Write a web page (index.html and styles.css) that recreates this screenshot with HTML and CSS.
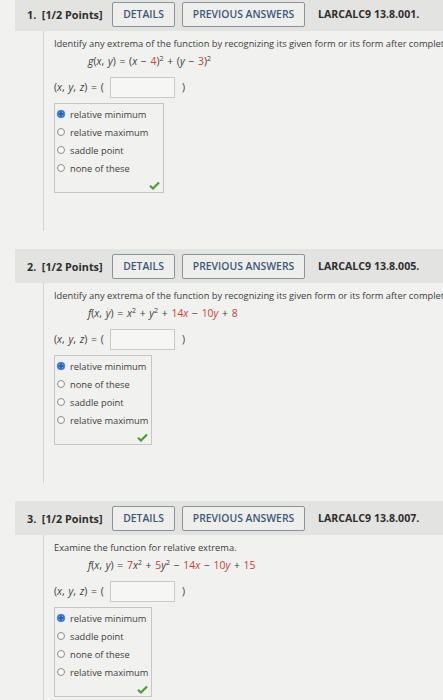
FILE: index.html
```html
<!DOCTYPE html>
<html>
<head>
<meta charset="utf-8">
<link rel="stylesheet" href="styles.css">
</head>
<body>
<div class="page">

  <section class="question q1">
    <div class="qhead">
      <span class="qnum">1.&nbsp; [1/2 Points]</span>
      <span class="btn btn-details">DETAILS</span>
      <span class="btn btn-prev">PREVIOUS ANSWERS</span>
      <span class="qref">LARCALC9 13.8.001.</span>
    </div>
    <div class="qbody">
      <div class="prompt">Identify any extrema of the function by recognizing its given form or its form after completing the square. Verify your results.</div>
      <div class="formula"><i>g</i>(<i>x</i>, <i>y</i>) = (<i>x</i> &minus; <span class="red">4</span>)<sup>2</sup> + (<i>y</i> &minus; <span class="red">3</span>)<sup>2</sup></div>
      <div class="answer"><span class="xyz">(<i>x</i>, <i>y</i>, <i>z</i>) = (</span><span class="inbox"></span><span class="close">)</span></div>
      <div class="choices wide">
        <div class="opt"><span class="radio on"></span>relative minimum</div>
        <div class="opt"><span class="radio"></span>relative maximum</div>
        <div class="opt"><span class="radio"></span>saddle point</div>
        <div class="opt"><span class="radio"></span>none of these</div>
        <div class="checkrow"><svg class="check" viewBox="0 0 12 10" width="11" height="9"><path d="M1 5.2 L4.3 8.4 L11 1.6" fill="none" stroke="#4f9a3a" stroke-width="2.4"/></svg></div>
      </div>
    </div>
  </section>

  <section class="question q2">
    <div class="qhead">
      <span class="qnum">2.&nbsp; [1/2 Points]</span>
      <span class="btn btn-details">DETAILS</span>
      <span class="btn btn-prev">PREVIOUS ANSWERS</span>
      <span class="qref">LARCALC9 13.8.005.</span>
    </div>
    <div class="qbody">
      <div class="prompt">Identify any extrema of the function by recognizing its given form or its form after completing the square. Verify your results.</div>
      <div class="formula"><i>f</i>(<i>x</i>, <i>y</i>) = <i>x</i><sup>2</sup> + <i>y</i><sup>2</sup> + <span class="red">14<i>x</i></span> &minus; <span class="red">10<i>y</i></span> + <span class="red">8</span></div>
      <div class="answer"><span class="xyz">(<i>x</i>, <i>y</i>, <i>z</i>) = (</span><span class="inbox"></span><span class="close">)</span></div>
      <div class="choices">
        <div class="opt"><span class="radio on"></span>relative minimum</div>
        <div class="opt"><span class="radio"></span>none of these</div>
        <div class="opt"><span class="radio"></span>saddle point</div>
        <div class="opt"><span class="radio"></span>relative maximum</div>
        <div class="checkrow"><svg class="check" viewBox="0 0 12 10" width="11" height="9"><path d="M1 5.2 L4.3 8.4 L11 1.6" fill="none" stroke="#4f9a3a" stroke-width="2.4"/></svg></div>
      </div>
    </div>
  </section>

  <section class="question q3">
    <div class="qhead">
      <span class="qnum">3.&nbsp; [1/2 Points]</span>
      <span class="btn btn-details">DETAILS</span>
      <span class="btn btn-prev">PREVIOUS ANSWERS</span>
      <span class="qref">LARCALC9 13.8.007.</span>
    </div>
    <div class="qbody last">
      <div class="prompt">Examine the function for relative extrema.</div>
      <div class="formula"><i>f</i>(<i>x</i>, <i>y</i>) = <span class="red">7</span><i>x</i><sup>2</sup> + <span class="red">5</span><i>y</i><sup>2</sup> &minus; <span class="red">14<i>x</i></span> &minus; <span class="red">10<i>y</i></span> + <span class="red">15</span></div>
      <div class="answer"><span class="xyz">(<i>x</i>, <i>y</i>, <i>z</i>) = (</span><span class="inbox"></span><span class="close">)</span></div>
      <div class="choices">
        <div class="opt"><span class="radio on"></span>relative minimum</div>
        <div class="opt"><span class="radio"></span>saddle point</div>
        <div class="opt"><span class="radio"></span>none of these</div>
        <div class="opt"><span class="radio"></span>relative maximum</div>
        <div class="checkrow"><svg class="check" viewBox="0 0 12 10" width="11" height="9"><path d="M1 5.2 L4.3 8.4 L11 1.6" fill="none" stroke="#4f9a3a" stroke-width="2.4"/></svg></div>
      </div>
    </div>
  </section>

</div>
</body>
</html>
```

FILE: styles.css
```css
html, body {
  margin: 0;
  padding: 0;
}
body {
  background: #f1f1ef;
  width: 443px;
  height: 700px;
  overflow: hidden;
  font-family: "Open Sans", "DejaVu Sans", sans-serif;
  color: #3c3c3c;
}
.page {
  display: flex;
  flex-direction: column;
  gap: 18px;
  padding-left: 15px;
  margin-top: -3px;
}
.question {
  display: flex;
  flex-direction: column;
}
.qhead {
  display: flex;
  align-items: center;
  height: 34px;
  background: #e3e3e1;
  padding-left: 12px;
  white-space: nowrap;
}
.qnum {
  font-weight: 700;
  font-size: 10.8px;
  color: #2e2e2e;
  width: 85px;
}
.btn {
  display: flex;
  align-items: center;
  justify-content: center;
  height: 25px;
  box-sizing: border-box;
  border: 1px solid #8c9299;
  border-radius: 2px;
  background: #eeeeec;
  color: #3d5676;
  font-size: 10.4px;
  font-weight: 600;
}
.btn-details {
  width: 63px;
}
.btn-prev {
  width: 123px;
  margin-left: 7px;
}
.qref {
  margin-left: 13px;
  font-weight: 700;
  font-size: 10.6px;
  color: #2e2e2e;
}
.qbody {
  margin-left: 28px;
  border-left: 1px solid #d2d2d0;
  padding: 6px 0 0 10px;
  height: 194px;
  white-space: nowrap;
  overflow: hidden;
  font-size: 9.3px;
}
.qbody.last {
  height: 160px;
}
.prompt {
  line-height: 14px;
}
.formula {
  line-height: 16px;
  margin-left: 34px;
  margin-top: 2px;
  font-size: 10.4px;
  word-spacing: 1px;
}
.formula sup {
  font-size: 7px;
  vertical-align: 4px;
  line-height: 0;
}
.red {
  color: #c8403a;
}
.answer {
  display: flex;
  align-items: center;
  margin-top: 7px;
  height: 22px;
  font-size: 10.4px;
}
.xyz {
  width: 56px;
  word-spacing: 1px;
}
.inbox {
  width: 65px;
  height: 21px;
  box-sizing: border-box;
  border: 1px solid #c9c9c7;
  background: #f6f6f4;
}
.close {
  margin-left: 7px;
}
.choices {
  margin-top: 5px;
  width: 98px;
  box-sizing: border-box;
  border: 1px solid #c6c6c4;
  padding: 1px 0 0 2px;
}
.choices.wide {
  width: 110px;
}
.opt {
  display: flex;
  align-items: center;
  height: 18px;
  font-size: 9.3px;
}
.radio {
  width: 8px;
  height: 8px;
  box-sizing: border-box;
  border: 1px solid #8e8e8e;
  border-radius: 50%;
  background: #f8f8f8;
  margin-right: 5px;
}
.radio.on {
  border: 2px solid #3a78d6;
  background: radial-gradient(circle, #2a5fb8 0 1.6px, #e8eefb 2px);
  box-shadow: 0 0 1px #7aa4e6;
}
.checkrow {
  display: flex;
  justify-content: flex-end;
  padding: 4px 3px 2px 0;
}
```
